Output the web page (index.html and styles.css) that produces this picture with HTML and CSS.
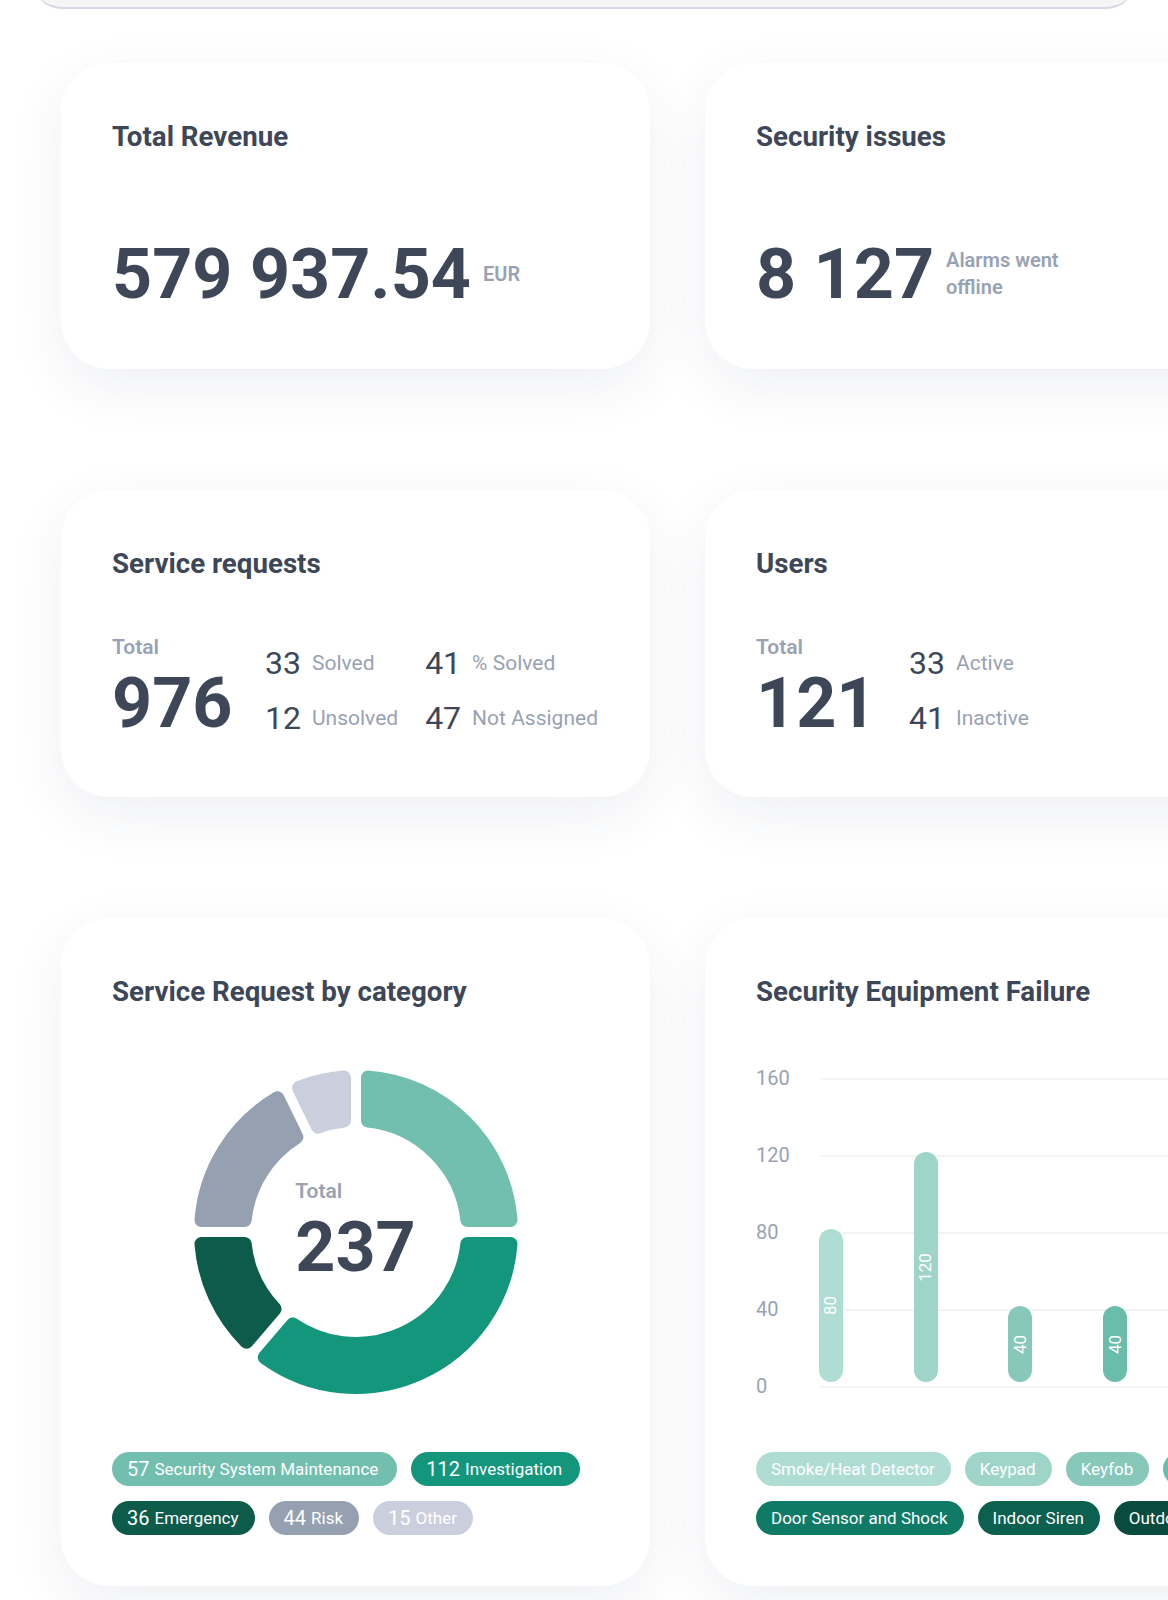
FILE: index.html
```html
<!DOCTYPE html>
<html lang="en">
<head>
<meta charset="utf-8">
<title>Dashboard</title>
<link rel="stylesheet" href="styles.css">
</head>
<body>
<div class="page">
  <div class="topbar"><div class="topbar-inner"></div></div>
  <main class="grid">
    <section class="card card-kpi">
      <h2 class="card-title">Total Revenue</h2>
      <div class="kpi">
        <span class="kpi-value">579 937.54</span>
        <span class="kpi-note">EUR</span>
      </div>
    </section>

    <section class="card card-kpi">
      <h2 class="card-title">Security issues</h2>
      <div class="kpi">
        <span class="kpi-value">8 127</span>
        <span class="kpi-note">Alarms went<br>offline</span>
      </div>
    </section>

    <section class="card card-stats">
      <h2 class="card-title">Service requests</h2>
      <div class="stats">
        <div class="total">
          <span class="total-label">Total</span>
          <span class="total-value">976</span>
        </div>
        <div class="stat-grid">
          <div class="stat"><span class="stat-num">33</span><span class="stat-label">Solved</span></div>
          <div class="stat"><span class="stat-num">41</span><span class="stat-label">% Solved</span></div>
          <div class="stat"><span class="stat-num">12</span><span class="stat-label">Unsolved</span></div>
          <div class="stat"><span class="stat-num">47</span><span class="stat-label">Not Assigned</span></div>
        </div>
      </div>
    </section>

    <section class="card card-stats">
      <h2 class="card-title">Users</h2>
      <div class="stats">
        <div class="total">
          <span class="total-label">Total</span>
          <span class="total-value">121</span>
        </div>
        <div class="stat-grid stat-grid--single">
          <div class="stat"><span class="stat-num">33</span><span class="stat-label">Active</span></div>
          <div class="stat"><span class="stat-num">41</span><span class="stat-label">Inactive</span></div>
        </div>
      </div>
    </section>

    <section class="card card-chart">
      <h2 class="card-title">Service Request by category</h2>
      <div class="donut">
        <svg class="donut-svg" width="330" height="330" viewBox="-165 -165 330 330" aria-hidden="true">
          <g stroke-width="14" stroke-linejoin="round">
            <path class="seg seg-maint" d="M12,-111.36 L12,-154.53 A155,155 0 0 1 154.53,-12 L111.36,-12 A112,112 0 0 0 12,-111.36 Z"/>
            <path class="seg seg-invest" d="M111.36,12 L154.53,12 A155,155 0 0 1 -91.23,125.29 L-63.20,92.47 A112,112 0 0 0 111.36,12 Z"/>
            <path class="seg seg-emerg" d="M-81.44,76.89 L-109.47,109.71 A155,155 0 0 1 -154.53,12 L-111.36,12 A112,112 0 0 0 -81.44,76.89 Z"/>
            <path class="seg seg-risk" d="M-111.36,-12 L-154.53,-12 A155,155 0 0 1 -78.54,-133.63 L-59.61,-94.83 A112,112 0 0 0 -111.36,-12 Z"/>
            <path class="seg seg-other" d="M-38.03,-105.35 L-56.96,-144.15 A155,155 0 0 1 -12,-154.53 L-12,-111.36 A112,112 0 0 0 -38.03,-105.35 Z"/>
          </g>
        </svg>
        <div class="donut-center">
          <span class="total-label">Total</span>
          <span class="total-value">237</span>
        </div>
      </div>
      <div class="legend">
        <div class="legend-row">
          <span class="chip chip-maint"><b class="chip-num">57</b> Security System Maintenance</span>
          <span class="chip chip-invest"><b class="chip-num">112</b> Investigation</span>
        </div>
        <div class="legend-row">
          <span class="chip chip-emerg"><b class="chip-num">36</b> Emergency</span>
          <span class="chip chip-risk"><b class="chip-num">44</b> Risk</span>
          <span class="chip chip-other"><b class="chip-num">15</b> Other</span>
        </div>
      </div>
    </section>

    <section class="card card-chart">
      <h2 class="card-title">Security Equipment Failure</h2>
      <div class="bar-chart">
        <div class="ticks">
          <div class="tick"><span class="tick-label">160</span><span class="tick-line"></span></div>
          <div class="tick"><span class="tick-label">120</span><span class="tick-line"></span></div>
          <div class="tick"><span class="tick-label">80</span><span class="tick-line"></span></div>
          <div class="tick"><span class="tick-label">40</span><span class="tick-line"></span></div>
          <div class="tick"><span class="tick-label">0</span><span class="tick-line"></span></div>
        </div>
        <div class="bars">
          <div class="bar c1" style="height:153px"><span class="bar-value">80</span></div>
          <div class="bar c2" style="height:230px"><span class="bar-value">120</span></div>
          <div class="bar c3" style="height:76px"><span class="bar-value">40</span></div>
          <div class="bar c4" style="height:76px"><span class="bar-value">40</span></div>
        </div>
      </div>
      <div class="legend">
        <div class="legend-row">
          <span class="chip c1">Smoke/Heat Detector</span>
          <span class="chip c2">Keypad</span>
          <span class="chip c3">Keyfob</span>
          <span class="chip c4">Motion Sensor</span>
        </div>
        <div class="legend-row">
          <span class="chip c5">Door Sensor and Shock</span>
          <span class="chip c6">Indoor Siren</span>
          <span class="chip c7">Outdoor Siren</span>
        </div>
      </div>
    </section>
  </main>
</div>
</body>
</html>
```

FILE: styles.css
```css
* { box-sizing: border-box; }

html, body {
  margin: 0;
  padding: 0;
  background: #ffffff;
}

body {
  font-family: Roboto, "Liberation Sans", Arial, sans-serif;
  color: #3d4757;
  overflow: hidden;
}

.page {
  width: 1168px;
  height: 1600px;
  overflow: hidden;
}

/* header remnant */
.topbar {
  height: 9px;
  margin: 0 32px;
  overflow: hidden;
  display: flex;
  align-items: flex-end;
}
.topbar-inner {
  flex: 1;
  height: 60px;
  background: #f5f5f6;
  border-bottom: 2px solid #d7d9e8;
  border-radius: 0 0 30px 30px;
}

/* layout */
.grid {
  display: grid;
  grid-template-columns: 589px 589px;
  column-gap: 55px;
  row-gap: 121px;
  padding: 54px 0 0 61px;
  width: max-content;
}

.card {
  background: #ffffff;
  border-radius: 48px;
  padding: 58px 51px 51px;
  box-shadow: 0 18px 56px rgba(38, 50, 110, 0.075);
  display: flex;
  flex-direction: column;
}

.card-title {
  margin: 0;
  font-size: 27.7px;
  line-height: 32px;
  font-weight: 700;
  color: #3d4757;
}

/* KPI cards */
.card-kpi { padding-bottom: 60px; }
.kpi {
  margin-top: 86px;
  display: flex;
  align-items: center;
  gap: 12px;
}
.kpi-value {
  font-size: 70px;
  line-height: 70px;
  font-weight: 700;
  white-space: nowrap;
}
.kpi-note {
  font-size: 20px;
  line-height: 27px;
  font-weight: 600;
  color: #98a2b3;
}

/* stats cards */
.card-stats { padding-bottom: 59px; }
.stats {
  margin-top: 55px;
  display: flex;
  align-items: flex-end;
}
.total {
  width: 153px;
  flex: none;
  display: flex;
  flex-direction: column;
}
.total-label {
  font-size: 21px;
  line-height: 24px;
  font-weight: 600;
  color: #98a2b3;
}
.total-value {
  margin-top: 9px;
  font-size: 70px;
  line-height: 70px;
  font-weight: 700;
  color: #3d4757;
}
.stat-grid {
  display: grid;
  grid-template-columns: auto auto;
  grid-auto-rows: 40px;
  column-gap: 27px;
  row-gap: 15.5px;
}
.stat-grid--single { grid-template-columns: auto; }
.stat {
  display: flex;
  align-items: center;
  gap: 11px;
  white-space: nowrap;
}
.stat-num {
  font-size: 32px;
  line-height: 40px;
  font-weight: 400;
  color: #3d4757;
}
.stat-label {
  font-size: 21px;
  line-height: 24px;
  font-weight: 400;
  color: #98a2b3;
}

/* donut */
.donut {
  margin-top: 59px;
  display: grid;
  place-items: center;
}
.donut-svg, .donut-center { grid-area: 1 / 1; }
.donut-center {
  display: flex;
  flex-direction: column;
  padding-bottom: 4px;
}
.seg-maint { fill: #72bfb0; stroke: #72bfb0; }
.seg-invest { fill: #13967c; stroke: #13967c; }
.seg-emerg { fill: #0c5b4b; stroke: #0c5b4b; }
.seg-risk { fill: #95a0b0; stroke: #95a0b0; }
.seg-other { fill: #cbcedc; stroke: #cbcedc; }

/* legend chips */
.legend {
  margin-top: 55px;
  display: flex;
  flex-direction: column;
  gap: 15px;
}
.legend-row {
  display: flex;
  gap: 14px;
  white-space: nowrap;
}
.chip {
  height: 34px;
  padding: 0 16px 0 15px;
  border-radius: 17px;
  display: inline-flex;
  align-items: center;
  font-size: 17px;
  font-weight: 400;
  color: #ffffff;
  flex: none;
}
.chip-num {
  font-size: 20px;
  font-weight: 400;
  margin-right: 5px;
}
.chip-maint { background: #72bfb0; padding-right: 19px; }
.chip-invest { background: #13967c; padding-right: 18px; }
.chip-emerg { background: #0c5b4b; }
.chip-risk { background: #95a0b0; }
.chip-other { background: #cbcedc; }

.c1 { background: #b0ddd3; }
.c2 { background: #9fd5c9; }
.c3 { background: #87c8ba; }
.c4 { background: #6abdab; }
.c5 { background: #0f7a65; }
.c6 { background: #0c604f; }
.c7 { background: #094b3e; }

/* bar chart */
.bar-chart {
  margin-top: 59px;
  display: grid;
}
.ticks, .bars { grid-area: 1 / 1; }
.ticks {
  display: flex;
  flex-direction: column;
  gap: 53px;
}
.tick {
  height: 24px;
  display: flex;
  align-items: center;
}
.tick-label {
  width: 65px;
  flex: none;
  font-size: 20px;
  line-height: 24px;
  color: #98a2b3;
  position: relative;
  top: -1px;
}
.tick-line {
  flex: 1;
  height: 2px;
  background: #f3f3f5;
}
.bars {
  margin-left: 63px;
  padding-bottom: 17px;
  display: flex;
  align-items: flex-end;
  gap: 70.7px;
}
.bar {
  width: 24px;
  flex: none;
  border-radius: 12px;
  display: flex;
  align-items: center;
  justify-content: center;
}
.bar-value {
  transform: rotate(-90deg);
  font-size: 17px;
  line-height: 17px;
  color: #ffffff;
  white-space: nowrap;
}

.card-chart + .card-chart .legend { margin-top: 53px; }
```
